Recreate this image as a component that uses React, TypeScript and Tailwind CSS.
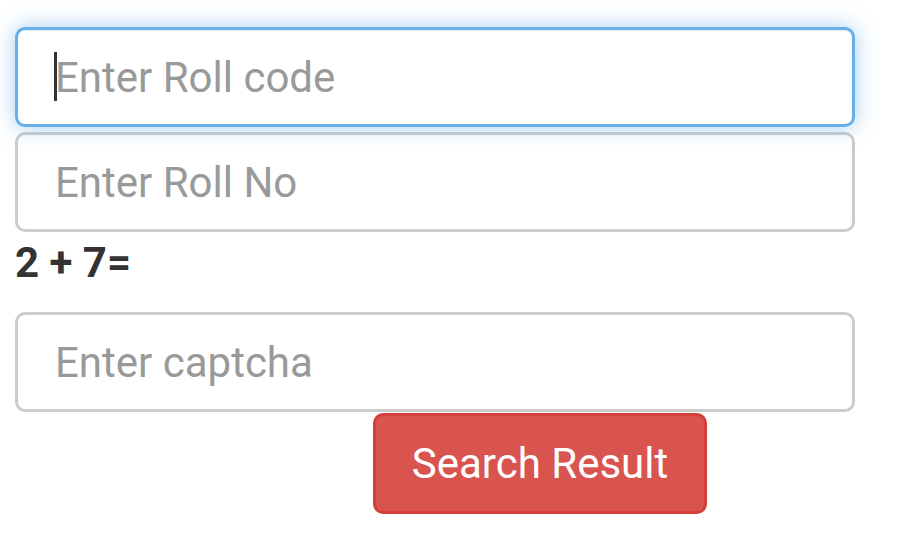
import React from 'react';

const inputBase =
    'block w-[840px] h-[100px] px-[37px] rounded-[10px] border-[3px] bg-white text-[42px] text-[#555] placeholder:text-[#999] outline-none';

export default function App() {
    return (
        <div className="min-h-[541px] w-[912px] bg-white pl-[15px] pt-[27px]" style={{ fontFamily: 'Roboto, "Noto Sans", sans-serif' }}>
            <div className="relative">
                <input
                    type="text"
                    placeholder="Enter Roll code"
                    className={`${inputBase} border-[#66afe9] shadow-[inset_0_1px_1px_rgba(0,0,0,0.075),0_0_21px_rgba(102,175,233,0.6)]`}
                    readOnly
                />
                <span className="absolute left-[39px] top-[25px] w-[3px] h-[49px] bg-[#333]" />
            </div>
            <input
                type="text"
                placeholder="Enter Roll No"
                className={`${inputBase} mt-[5px] border-[#ccc]`}
            />
            <div className="mt-[9px] h-[44px] text-[42px] leading-[44px] font-bold text-[#333]">2 + 7=</div>
            <input
                type="text"
                placeholder="Enter captcha"
                className={`${inputBase} mt-[27px] border-[#ccc]`}
            />
            <button
                type="button"
                className="ml-[358px] mt-px w-[334px] h-[101px] rounded-[10px] border-[3px] border-[#d43f3a] bg-[#d9534f] text-[42px] text-white"
            >
                Search Result
            </button>
        </div>
    );
}
